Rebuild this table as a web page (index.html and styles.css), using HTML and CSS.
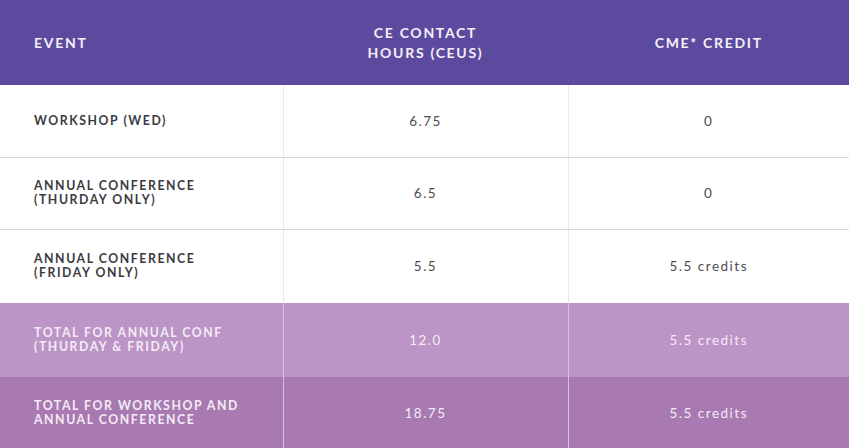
FILE: index.html
```html
<!DOCTYPE html>
<html lang="en">
<head>
<meta charset="utf-8">
<title>CE / CME Credits</title>
<link rel="stylesheet" href="styles.css">
</head>
<body>
<table class="credits">
  <colgroup>
    <col class="c1"><col class="c2"><col class="c3">
  </colgroup>
  <thead>
    <tr class="head">
      <th class="event">EVENT</th>
      <th>CE CONTACT<br>HOURS (CEUS)</th>
      <th>CME* CREDIT</th>
    </tr>
  </thead>
  <tbody>
    <tr class="plain r1">
      <td class="event">WORKSHOP (WED)</td>
      <td>6.75</td>
      <td>0</td>
    </tr>
    <tr class="plain r2">
      <td class="event">ANNUAL CONFERENCE<br>(THURDAY ONLY)</td>
      <td>6.5</td>
      <td>0</td>
    </tr>
    <tr class="plain r3">
      <td class="event">ANNUAL CONFERENCE<br>(FRIDAY ONLY)</td>
      <td>5.5</td>
      <td>5.5 credits</td>
    </tr>
    <tr class="total light r4">
      <td class="event">TOTAL FOR ANNUAL CONF<br>(THURDAY &amp; FRIDAY)</td>
      <td>12.0</td>
      <td>5.5 credits</td>
    </tr>
    <tr class="total dark r5">
      <td class="event">TOTAL FOR WORKSHOP AND<br>ANNUAL CONFERENCE</td>
      <td>18.75</td>
      <td>5.5 credits</td>
    </tr>
  </tbody>
</table>
</body>
</html>
```
FILE: styles.css
```css
html, body {
  margin: 0;
  padding: 0;
  background: #ffffff;
}
.credits {
  width: 849px;
  border-collapse: collapse;
  table-layout: fixed;
  font-family: "Lato", "Open Sans", sans-serif;
}
.c1 { width: 283px; }
.c2 { width: 285px; }
.c3 { width: 281px; }

.credits th, .credits td {
  padding: 0;
  text-align: center;
  vertical-align: middle;
  border-left: 1px solid #ebe7ee;
}
.credits th:first-child, .credits td:first-child {
  border-left: none;
}
.head {
  height: 85px;
  background: #5c4a9e;
}
.head th {
  color: #f4f0f8;
  font-size: 14px;
  font-weight: 700;
  letter-spacing: 1.7px;
  line-height: 20px;
  border-left-color: #5f4ea1;
}
.credits .event {
  text-align: left;
  padding-left: 34px;
}
.credits td.event {
  font-size: 12.3px;
  font-weight: 700;
  letter-spacing: 1.55px;
  line-height: 14px;
}
.plain td {
  color: #4e4c51;
  font-size: 13.5px;
  font-weight: 400;
  letter-spacing: 1.5px;
  border-bottom: 1px solid #dcd2e3;
}
.plain td.event { color: #3c3a40; }
.r1 { height: 72px; }
.r2 { height: 72px; }
.r3 { height: 74px; }
.r3 td { border-bottom: none; }
.r4 { height: 74px; }
.r5 { height: 71px; }
.total td {
  color: #f3ecf5;
  font-size: 13.5px;
  font-weight: 400;
  letter-spacing: 1.5px;
  border-left-color: #d6c2dc;
}
.total td.event { font-weight: 700; }
.light { background: #bc94c6; }
.dark { background: #a979b1; }
```
